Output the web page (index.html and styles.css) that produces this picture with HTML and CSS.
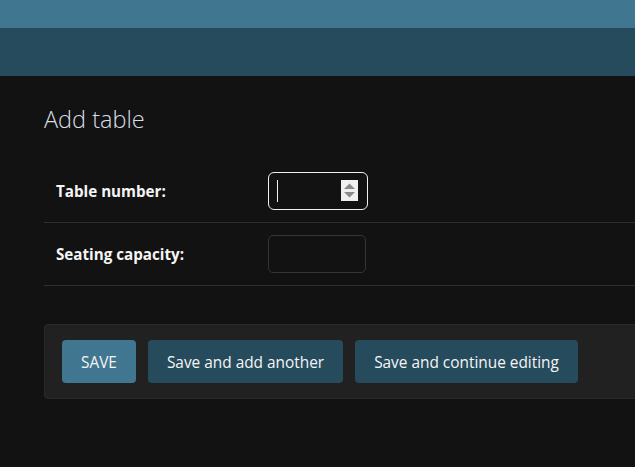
FILE: index.html
```html
<!DOCTYPE html>
<html>
<head>
<meta charset="utf-8">
<link rel="stylesheet" href="styles.css">
</head>
<body>
<div class="header"></div>
<div class="nav"></div>
<main class="content">
  <h1 class="title">Add table</h1>
  <div class="fieldset">
    <div class="form-row">
      <label class="label">Table number:</label>
      <div class="input focused">
        <span class="caret"></span>
        <span class="spinner">
          <svg width="17" height="21" viewBox="0 0 17 21"><rect width="17" height="21" fill="#f0f0f0"/><path d="M3 9 L8.5 3.5 L14 9 Z" fill="#8a8a8a"/><path d="M3 12 L8.5 17.5 L14 12 Z" fill="#8a8a8a"/></svg>
        </span>
      </div>
    </div>
    <div class="form-row">
      <label class="label">Seating capacity:</label>
      <div class="input"></div>
    </div>
  </div>
  <div class="submit-row">
    <button class="btn btn-default">SAVE</button>
    <button class="btn">Save and add another</button>
    <button class="btn">Save and continue editing</button>
  </div>
</main>
</body>
</html>
```
FILE: styles.css
```css
html, body { margin: 0; padding: 0; overflow: hidden; }
body {
  background: #121212;
  font-family: "Open Sans", "Noto Sans", sans-serif;
  color: #f5f5f5;
  width: 635px;
  height: 467px;
}
.header { height: 28px; background: #417690; }
.nav { height: 48px; background: #264b5d; }
.content { padding: 26px 0 0 44px; }
.title {
  margin: 0;
  font-size: 23.5px;
  font-weight: 300;
  line-height: 34px;
  color: #d8dfe4;
}
.fieldset { margin-top: 24px; width: 620px; }
.form-row {
  display: flex;
  align-items: center;
  padding: 12px 0 12px 12px;
  border-bottom: 1px solid #2e2e2e;
}
.label {
  width: 212px;
  font-size: 15.2px;
  font-weight: 700;
  color: #f5f5f5;
}
.input {
  position: relative;
  width: 96px;
  height: 36px;
  border: 1px solid #353535;
  border-radius: 5px;
  background: #121212;
}
.input.focused { border-color: #f0f0f0; border-radius: 6px; width: 98px; }
.caret {
  position: absolute;
  left: 8px;
  top: 7px;
  width: 1px;
  height: 22px;
  background: #f0f0f0;
}
.spinner {
  position: absolute;
  right: 9px;
  top: 7px;
  width: 17px;
  height: 21px;
  display: block;
}
.spinner svg { display: block; }
.submit-row {
  margin-top: 38px;
  width: 640px;
  box-sizing: border-box;
  display: flex;
  gap: 12px;
  padding: 15px 17px;
  background: #212121;
  border: 1px solid #292929;
  border-radius: 4px;
}
.btn {
  height: 43px;
  padding: 1px 19px 0;
  border: none;
  border-radius: 4px;
  background: #264b5d;
  color: #f5f5f5;
  font-family: "Open Sans", "Noto Sans", sans-serif;
  font-size: 15.4px;
  cursor: pointer;
}
.btn-default { background: #417690; }
```
